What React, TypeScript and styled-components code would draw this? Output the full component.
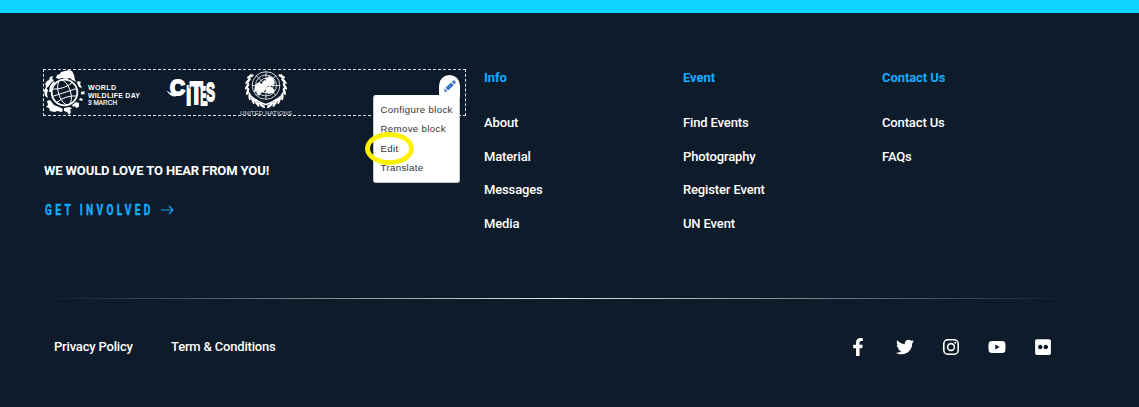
import React from 'react';
import styled, { createGlobalStyle } from 'styled-components';
import { FaFacebookF, FaTwitter, FaYoutube, FaFlickr } from 'react-icons/fa';

const Global = createGlobalStyle`
  * { box-sizing: border-box; }
  body { margin: 0; background: #0e1b2a; font-family: Roboto, sans-serif; }
`;

const Page = styled.footer`
  width: 1139px;
  height: 407px;
  overflow: hidden;
  background: #0e1b2a;
  border-top: 13px solid #0cd3ff;
  color: #fff;
  font-size: 13px;
  font-weight: 500;
`;
const Main = styled.div`
  display: grid;
  grid-template-columns: 423px 199px 199px 199px;
  column-gap: 0;
  padding: 56px 0 0 43px;
  height: 285px;
`;
const Brand = styled.div``;
const LogoBlock = styled.div`
  position: relative;
  width: 423px;
  height: 47px;
  border: 1px dashed #dfe6ea;
`;
const Logos = styled.svg`
  display: block;
  overflow: visible;
`;
const EditButton = styled.button`
  position: absolute;
  top: 5px;
  right: 5px;
  width: 21px;
  height: 22px;
  padding: 0;
  border: 0;
  border-radius: 11px 11px 0 0;
  background: #fff;
  display: flex;
  align-items: center;
  justify-content: center;
`;
const Menu = styled.ul`
  position: absolute;
  top: 25px;
  right: 5px;
  width: 87px;
  height: 88px;
  margin: 0;
  padding: 4px 0 0 6.5px;
  list-style: none;
  background: #fff;
  border: 1px solid #c4c8cc;
  border-radius: 3px 0 3px 3px;
  border-top-color: #fff;
  color: #333;
  font: 400 9.7px/19.4px "Liberation Sans", sans-serif;
  letter-spacing: 0.33px;
  white-space: nowrap;
`;
const Highlight = styled.div`
  position: absolute;
  left: 321px;
  top: 62px;
  width: 49px;
  height: 33px;
  border: 5px solid #fff200;
  border-radius: 50%;
`;
const Slogan = styled.p`
  margin: 46px 0 0 1px;
  font-size: 13px;
  line-height: 17px;
  font-weight: 700;
  letter-spacing: -0.11px;
  white-space: nowrap;
`;
const Involved = styled.a`
  display: flex;
  align-items: center;
  gap: 8px;
  margin: 21px 0 0 2px;
  height: 20px;
  color: #12adff;
`;
const Condensed = styled.span`
  width: 108px;
  font-size: 15px;
  line-height: 20px;
  font-weight: 700;
  letter-spacing: 5px;
  white-space: nowrap;
  -webkit-text-stroke: 0.4px #12adff;
  transform: scaleX(0.675);
  transform-origin: left;
`;
const Column = styled.nav`
  padding: 0 0 0 18px;
`;
const Title = styled.h3`
  margin: 0 0 28.2px;
  font-size: 13px;
  line-height: 17px;
  font-weight: 700;
  letter-spacing: -0.08px;
  color: #12adff;
`;
const Link = styled.a`
  display: block;
  line-height: 17px;
  margin-bottom: 16.6px;
  letter-spacing: -0.14px;
`;
const Divider = styled.div`
  height: 1px;
  margin: 0 67px 0 43px;
  background: linear-gradient(90deg, transparent, #e4e6df 50%, transparent);
`;
const Bottom = styled.div`
  display: flex;
  justify-content: space-between;
  align-items: center;
  height: 20px;
  margin: 38px 86.6px 0 54px;
`;
const Legal = styled.div`
  display: flex;
  gap: 38.2px;
  line-height: 17px;
  padding-bottom: 2px;
  letter-spacing: -0.18px;
`;
const Social = styled.div`
  display: flex;
  gap: 28.3px;
  align-items: center;
`;
const SocialItem = styled.a`
  width: 18px;
  height: 20px;
  display: flex;
  align-items: center;
  justify-content: center;
`;

const columns = [
  { title: 'Info', links: ['About', 'Material', 'Messages', 'Media'] },
  { title: 'Event', links: ['Find Events', 'Photography', 'Register Event', 'UN Event'] },
  { title: 'Contact Us', links: ['Contact Us', 'FAQs'] },
];

function WildlifeLogo() {
  return (
    <g fill="#fff">
      <g fill="none" stroke="#fff">
        <circle cx="20.5" cy="22.5" r="12.8" strokeWidth="1.8" />
        <g strokeWidth=".9" transform="rotate(-18 20.5 22.5)">
          <ellipse cx="20.5" cy="22.5" rx="6" ry="12.8" />
          <path d="M8 22.5h25M10 15.5q10.500 4 21 0M10 29.500q10.500-4 21 0" />
        </g>
      </g>
      <path d="M12 8l1-3 3-1 1-2 8-2 3 1 2 4 1 5 2 2-5-2-2-2-4 1-4-1-3 1z" />
      <path d="M1 14l2-3 2-1 1-3 3-1-1 3 2 1-3 3-3 4-3 3 1-4z" />
      <path d="M0 20l2-2 2 2-1 4 1 4-3-2zM5 22l1-6 4-5 1 2-3 4-1 5z" />
      <path d="M3 31l3-1 4 5 5 2 4 2-1 3-5-1-2 1-5-1-1-3-3-1 2-2z" />
      <path d="M20 38l5-1 3 1-2 2 1 2-2 3-2-3-3-1z" />
      <path d="M28 35l4-3 3 1v4l-3 1-1-2-2 1z" />
      <path d="M34 11l3 1-1 2 2 4-3-1-2-4zM37 22l4-1-1 1.500 1 1.500-4 .5zM36 28l3 1-1 2-3-1z" />
      <g fontFamily="Liberation Sans, sans-serif" fontWeight="700" fontSize="7">
        <text x="44" y="19.9" textLength="28">WORLD</text>
        <text x="44" y="27.5" textLength="52">WILDLIFE DAY</text>
        <text x="44" y="34.8" fontSize="6.4" fontWeight="400" stroke="#fff" strokeWidth=".2" textLength="29">3 MARCH</text>
      </g>
    </g>
  );
}

const citesLetters = [
  { char: 'C', x: 126, y: 24.500, size: 22, width: 15 },
  { char: 'I', x: 141.900, y: 35, size: 28, width: 5.500 },
  { char: 'T', x: 145.800, y: 34, size: 31, width: 13 },
  { char: 'E', x: 156, y: 35, size: 25, width: 7.500 },
  { char: 'S', x: 162, y: 31, size: 25, width: 9 },
];

function CitesLogo() {
  return (
    <g fill="#fff" stroke="#fff">
      <path d="M122.500 20.500q4 4 10 2l5 1.500q-6 4-10.500 1.500-3-2-4.500-5z" stroke="none" />
      <text fontFamily="Liberation Sans, sans-serif" fontWeight="700" strokeWidth="1.800">
        {citesLetters.map((l) => (
          <tspan
            key={l.char}
            x={l.x}
            y={l.y}
            fontSize={l.size}
            textLength={l.width}
            lengthAdjust="spacingAndGlyphs"
          >
            {l.char}
          </tspan>
        ))}
      </text>
      <path
        d="M147.300 35.500V18h-2.300v-7M156.300 36V18.500M162.300 16l-.6 5 1 3-.6 4"
        fill="none"
        stroke="#0e1b2a"
        strokeWidth=".6"
      />
    </g>
  );
}

const leafAngles = [122, 138, 154, 170, 186, 202, 218, 234];

function UnLogo() {
  return (
    <g fill="none" stroke="#fff">
      <g strokeWidth=".8">
        <circle cx="222" cy="15.5" r="13.800" />
        <circle cx="222" cy="15.5" r="10.500" />
        <circle cx="222" cy="15.5" r="7.200" />
        <circle cx="222" cy="15.5" r="3.800" />
        <path d="M222 2v27M208 15.500h28M212.200 5.700l19.600 19.600M212.200 25.300l19.600-19.600" />
      </g>
      <path fill="#fff" stroke="none" d="M211 15l4-3 3 2 2-4 4 2 1 3-3 3-2 4-4 1-3-2-3 1zM222 9l3-3 4 2 2 5-2 3-4-1-3-3zM222 18l4-2 5 4-2 3-5 1-2-3zM211 21l6 2-2 3z" />
      {[false, true].map((flip) => (
        <g key={String(flip)} transform={flip ? 'translate(444 0) scale(-1 1)' : undefined}>
          <path d="M207 4q-7 14 0 22 6 6 20 10" strokeWidth="1.1" />
          {leafAngles.map((a) => (
            <ellipse
              key={a}
              cx="222"
              cy="-1.900"
              rx="3.700"
              ry="1.200"
              fill="#fff"
              stroke="none"
              transform={`rotate(${-a + 66} 222 17) rotate(28 222 -1.900)`}
            />
          ))}
          <path d="M206 28q5-1 10 4-7 0-10-4M211 33q5-1.500 8 0-4 3-8 0" fill="#fff" stroke="none" />
        </g>
      ))}
      <text x="196" y="45" fill="#d6dde2" stroke="none" fontFamily="Liberation Sans, sans-serif" fontSize="6" textLength="52">
        UNITED NATIONS
      </text>
    </g>
  );
}

export default function App() {
  return (
    <>
      <Global />
      <Page>
        <Main>
          <Brand>
            <LogoBlock>
              <Logos width="260" height="45" viewBox="0 0 260 45">
                <WildlifeLogo />
                <CitesLogo />
                <UnLogo />
              </Logos>
              <Menu>
                <li>Configure block</li>
                <li>Remove block</li>
                <li>Edit</li>
                <li>Translate</li>
              </Menu>
              <EditButton aria-label="Edit block">
                <svg width="13" height="13" viewBox="0 0 13 13" fill="#3f76c8">
                  <path d="M1 12l.8-3.500 2.700 2.700zM2.500 7.800L8 2.500l2.700 2.700-5.500 5.400zM8.700 1.800L10 .6q.6-.5 1.200 0l1.300 1.300q.5.6 0 1.200l-1.200 1.300z" />
                </svg>
              </EditButton>
              <Highlight />
            </LogoBlock>
            <Slogan>WE WOULD LOVE TO HEAR FROM YOU!</Slogan>
            <Involved>
              <Condensed>GET INVOLVED</Condensed>
              <svg width="13" height="10" viewBox="0 0 13 10" fill="none" stroke="#12adff" strokeWidth="1.1">
                <path d="M0 5h12M8 1l4 4-4 4" />
              </svg>
            </Involved>
          </Brand>
          {columns.map((c) => (
            <Column key={c.title}>
              <Title>{c.title}</Title>
              {c.links.map((l) => (
                <Link key={l}>{l}</Link>
              ))}
            </Column>
          ))}
        </Main>
        <Divider />
        <Bottom>
          <Legal>
            <span>Privacy Policy</span>
            <span>Term &amp; Conditions</span>
          </Legal>
          <Social>
            <SocialItem><FaFacebookF size={18} /></SocialItem>
            <SocialItem><FaTwitter size={18} /></SocialItem>
            <SocialItem>
              <svg width="18" height="18" viewBox="0 0 18 18" fill="none" stroke="#fff" strokeWidth="1.600">
                <rect x="1.800" y="1.800" width="14.400" height="14.400" rx="4" />
                <circle cx="9" cy="9" r="3.400" />
                <circle cx="13.200" cy="4.800" r="1" fill="#fff" stroke="none" />
              </svg>
            </SocialItem>
            <SocialItem><FaYoutube size={18} /></SocialItem>
            <SocialItem><FaFlickr size={18} /></SocialItem>
          </Social>
        </Bottom>
      </Page>
    </>
  );
}
